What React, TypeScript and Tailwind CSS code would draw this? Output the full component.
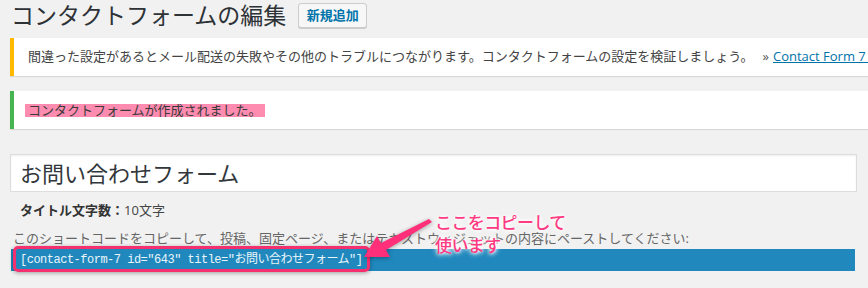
export default function App() {
  return (
    <div className="relative h-[288px] w-[868px] overflow-hidden bg-[#f1f1f1] pl-[10px] font-['Open_Sans','Noto_Sans_CJK_JP',sans-serif] text-[#444]">
      {/* Header */}
      <div className="flex h-[30px] items-center">
        <h1 className="pl-[1px] text-[23px] leading-[30px] font-normal text-[#2d3237]">コンタクトフォームの編集</h1>
        <button className="ml-[12px] mt-[1px] h-[25px] w-[69px] rounded-[3px] border border-[#ccc] bg-[#f7f7f7] text-[13px] leading-[23px] font-semibold text-[#0073aa] shadow-[0_1px_0_#ccc]">
          新規追加
        </button>
      </div>

      {/* Warning notice */}
      <div className="mt-[8px] flex h-[38px] w-[870px] items-center whitespace-nowrap border-l-4 border-[#ffb900] bg-white pl-[14px] text-[13px] shadow-[0_1px_1px_rgba(0,0,0,0.1)]">
        間違った設定があるとメール配送の失敗やその他のトラブルにつながります。コンタクトフォームの設定を検証しましょう。
        <span className="ml-[9px] text-[#555]">»</span>
        <a className="ml-[4px] text-[#0073aa] underline">Contact Form 7 の設定を検証する</a>
      </div>

      {/* Success notice */}
      <div className="mt-[15px] flex h-[38px] w-[870px] items-center whitespace-nowrap border-l-4 border-[#46b450] bg-white pl-[11px] text-[13px] shadow-[0_1px_1px_rgba(0,0,0,0.1)]">
        <span className="inline-block h-[13px] bg-[#fd8cb0] px-[3px] leading-[13px] text-[#3a3a3a]">コンタクトフォームが作成されました。</span>
      </div>

      {/* Title input */}
      <div className="mt-[25px] flex h-[38px] w-[847px] items-center border border-[#ddd] bg-white pl-[9px] text-[22px] text-[#32373c] shadow-[inset_0_1px_2px_rgba(0,0,0,0.07)]">
        お問い合わせフォーム
      </div>

      <div className="mt-[8px] h-[20px] pl-[10px] text-[13px] leading-[20px] text-[#444]">
        <span className="font-bold text-[#333]">タイトル文字数：</span>10文字
      </div>

      <div className="mt-[8px] h-[20px] pl-[3px] text-[13px] leading-[20px] text-[#666]">
        このショートコードをコピーして、投稿、固定ページ、またはテキストウィジェットの内容にペーストしてください:
      </div>

      {/* Shortcode bar */}
      <div className="relative ml-[1px] mt-[1px] h-[22px] w-[844px] bg-[#2088bd]">
        <span className="absolute left-[2px] top-[-3px] h-[26px] w-[357px] rounded-[5px] border-[3px] border-[#f5306f] shadow-[0_1px_4px_rgba(0,0,0,0.35)]" />
        <div className="pl-[9px] font-['Liberation_Mono','Noto_Sans_CJK_JP',monospace] text-[12px] leading-[22px] tracking-[-0.5px] text-[#eaf5fb]">
          [contact-form-7 id="643" title="お問い合わせフォーム"]
        </div>
      </div>

      {/* Annotation */}
      <svg className="pointer-events-none absolute left-0 top-0 drop-shadow-[0_1px_2px_rgba(0,0,0,0.35)]" width="868" height="288">
        <polygon points="432,222 386,250 390,257 364,257 377,236 381,243 429,219" fill="#ff3079" />
      </svg>
      <div className="absolute left-[435px] top-[211px] text-[17px] leading-[23px] font-medium tracking-[-0.6px] text-[#ff3a82] [text-shadow:0_0_3px_#fff,0_0_5px_#fff,0_0_6px_#fff]">
        <div>ここをコピーして</div>
        <div>使います</div>
      </div>
    </div>
  );
}
